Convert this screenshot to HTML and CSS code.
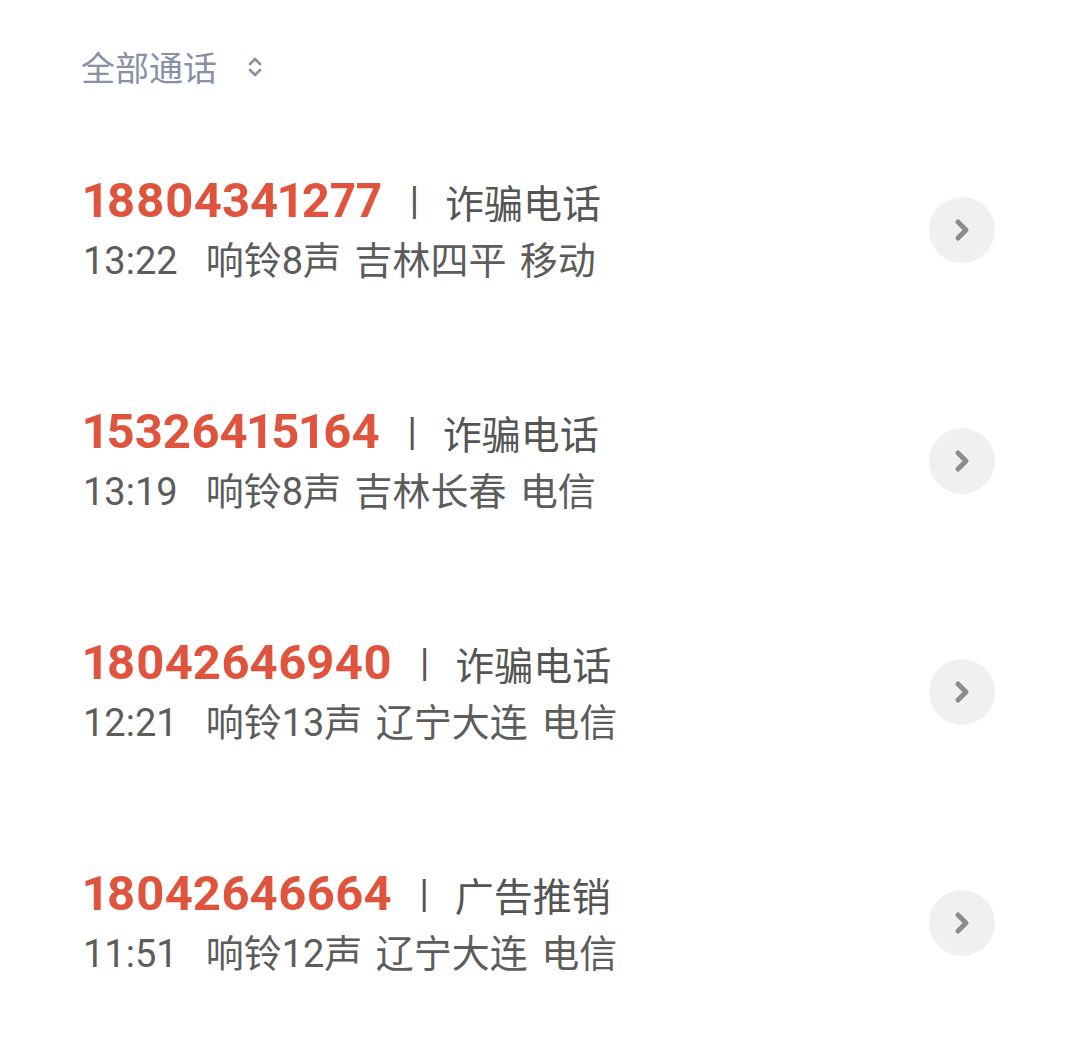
FILE: index.html
```html
<!DOCTYPE html>
<html lang="zh-CN">
<head>
    <meta charset="UTF-8">
    <meta name="viewport" content="width=device-width, initial-scale=1.0">
    <title>通话记录</title>
    <link rel="stylesheet" href="styles.css">
</head>
<body>
    <div class="filter">
        <span>全部通话</span>
        <svg class="sort-icon" width="16" height="26" viewBox="0 0 16 26">
            <path d="M3 10 L8 5 L13 10 M3 16 L8 21 L13 16" fill="none" stroke="#8a8fa8" stroke-width="2.6" stroke-linecap="round" stroke-linejoin="round"/>
        </svg>
    </div>

    <ul class="call-list">
        <li class="call">
            <div class="call-info">
                <div class="call-top"><span class="number">18804341277</span><span class="sep">|</span><span class="tag">诈骗电话</span></div>
                <div class="call-meta"><span class="time">13:22</span>响铃8声 吉林四平 移动</div>
            </div>
            <button class="more"><svg width="28" height="28" viewBox="0 0 28 28"><path d="M10 6 L18 14 L10 22" fill="none" stroke="#8c8c8c" stroke-width="5" stroke-linecap="round" stroke-linejoin="round"/></svg></button>
        </li>
        <li class="call">
            <div class="call-info">
                <div class="call-top"><span class="number">15326415164</span><span class="sep">|</span><span class="tag">诈骗电话</span></div>
                <div class="call-meta"><span class="time">13:19</span>响铃8声 吉林长春 电信</div>
            </div>
            <button class="more"><svg width="28" height="28" viewBox="0 0 28 28"><path d="M10 6 L18 14 L10 22" fill="none" stroke="#8c8c8c" stroke-width="5" stroke-linecap="round" stroke-linejoin="round"/></svg></button>
        </li>
        <li class="call">
            <div class="call-info">
                <div class="call-top"><span class="number">18042646940</span><span class="sep">|</span><span class="tag">诈骗电话</span></div>
                <div class="call-meta"><span class="time">12:21</span>响铃13声 辽宁大连 电信</div>
            </div>
            <button class="more"><svg width="28" height="28" viewBox="0 0 28 28"><path d="M10 6 L18 14 L10 22" fill="none" stroke="#8c8c8c" stroke-width="5" stroke-linecap="round" stroke-linejoin="round"/></svg></button>
        </li>
        <li class="call">
            <div class="call-info">
                <div class="call-top"><span class="number">18042646664</span><span class="sep">|</span><span class="tag">广告推销</span></div>
                <div class="call-meta"><span class="time">11:51</span>响铃12声 辽宁大连 电信</div>
            </div>
            <button class="more"><svg width="28" height="28" viewBox="0 0 28 28"><path d="M10 6 L18 14 L10 22" fill="none" stroke="#8c8c8c" stroke-width="5" stroke-linecap="round" stroke-linejoin="round"/></svg></button>
        </li>
    </ul>
</body>
</html>
```

FILE: styles.css
```css
body {
    font-family: Roboto, "Noto Sans CJK SC", sans-serif;
    background-color: #ffffff;
    margin: 0;
    padding: 0;
}
.filter {
    display: flex;
    align-items: center;
    gap: 30px;
    padding: 43px 0 0 81px;
    height: 46px;
    font-size: 34px;
    color: #8a8fa8;
}
.sort-icon {
    margin-top: 2px;
}
.call-list {
    list-style: none;
    margin: 0;
    padding: 25px 79px 0 83px;
}
.call {
    display: flex;
    align-items: center;
    justify-content: space-between;
    height: 231px;
}
.call-info {
    display: flex;
    flex-direction: column;
    gap: 4px;
}
.call-top {
    display: flex;
    align-items: center;
    height: 58px;
}
.number {
    font-size: 49px;
    font-weight: 700;
    font-variant-numeric: proportional-nums;
    color: #e0533d;
}
.sep {
    font-size: 38px;
    color: #555;
    margin: 0 26px 0 28px;
}
.tag {
    font-size: 39px;
    color: #555;
}
.call-meta {
    font-size: 38px;
    color: #5c5c5c;
    height: 54px;
    line-height: 54px;
    word-spacing: 4px;
}
.time {
    margin-right: 28px;
}
.more {
    width: 66px;
    height: 66px;
    border-radius: 50%;
    border: none;
    background-color: #f0f0f0;
    display: flex;
    align-items: center;
    justify-content: center;
    padding: 0;
    cursor: pointer;
}
```
